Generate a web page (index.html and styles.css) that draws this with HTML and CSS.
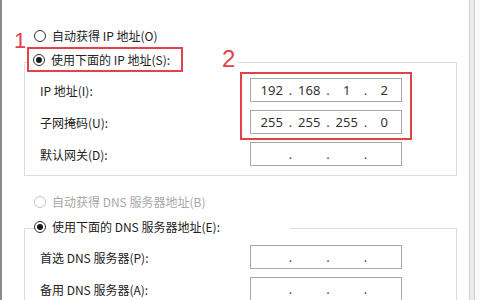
FILE: index.html
```html
<!DOCTYPE html>
<html lang="zh-CN">
<head>
<meta charset="utf-8">
<title>IP 设置</title>
<link rel="stylesheet" href="styles.css">
</head>
<body>
<div class="screen">
  <div class="edge-left"></div>
  <main class="panel">
    <div class="radio-row first">
      <span class="radio"></span><span class="rtext">自动获得 IP 地址(O)</span>
    </div>
    <div class="legend legend-ip">
      <div class="mark-box">
        <span class="radio on"></span><span class="rtext">使用下面的 IP 地址(S):</span>
      </div>
    </div>
    <section class="group group-ip">
      <div class="field-row">
        <span class="label">IP 地址(I):</span>
        <div class="ip"><span>192</span><i>.</i><span>168</span><i>.</i><span>1</span><i>.</i><span>2</span></div>
      </div>
      <div class="field-row">
        <span class="label">子网掩码(U):</span>
        <div class="ip"><span>255</span><i>.</i><span>255</span><i>.</i><span>255</span><i>.</i><span>0</span></div>
      </div>
      <div class="field-row">
        <span class="label">默认网关(D):</span>
        <div class="ip"><span></span><i>.</i><span></span><i>.</i><span></span><i>.</i><span></span></div>
      </div>
    </section>

    <div class="radio-row disabled">
      <span class="radio"></span><span class="rtext">自动获得 DNS 服务器地址(B)</span>
    </div>
    <div class="legend legend-dns">
      <span class="radio on"></span><span class="rtext">使用下面的 DNS 服务器地址(E):</span>
    </div>
    <section class="group group-dns">
      <div class="field-row">
        <span class="label">首选 DNS 服务器(P):</span>
        <div class="ip"><span></span><i>.</i><span></span><i>.</i><span></span><i>.</i><span></span></div>
      </div>
      <div class="field-row">
        <span class="label">备用 DNS 服务器(A):</span>
        <div class="ip"><span></span><i>.</i><span></span><i>.</i><span></span><i>.</i><span></span></div>
      </div>
    </section>

    <span class="anno anno-1">1</span>
    <span class="anno anno-2">2</span>
    <div class="anno-box"></div>
  </main>
  <div class="scroll-strip"></div>
  <div class="edge-right"></div>
</div>
</body>
</html>
```

FILE: styles.css
```css
html, body {
  margin: 0;
  padding: 0;
  background: #ffffff;
}

body {
  width: 480px;
  height: 300px;
  overflow: hidden;
  font-family: "Noto Sans CJK SC", "Noto Sans", sans-serif;
  font-size: 12px;
  color: #222222;
}

.screen {
  display: flex;
  width: 480px;
  height: 300px;
}

.edge-left {
  width: 2px;
  flex: none;
  background: #8c8c8c;
}

.panel {
  position: relative;
  width: 467px;
  flex: none;
  padding-top: 26px;
  box-sizing: border-box;
}

.scroll-strip {
  width: 6px;
  flex: none;
  box-sizing: border-box;
  background: #ebebeb;
  border-left: 1px solid #d2d2d2;
  border-right: 1px solid #cdcdcd;
}

.edge-right {
  flex: 1;
  background: #fafafa;
}

/* radio rows */
.radio-row,
.legend-dns,
.mark-box {
  display: flex;
  align-items: center;
  gap: 6px;
  height: 20px;
  line-height: 20px;
  white-space: nowrap;
}

.radio-row {
  margin-left: 32px;
}

.radio {
  width: 12px;
  height: 12px;
  flex: none;
  box-sizing: border-box;
  border: 1px solid #333333;
  border-radius: 50%;
  background: #ffffff;
  display: flex;
  align-items: center;
  justify-content: center;
}

.radio.on::after {
  content: "";
  width: 6px;
  height: 6px;
  border-radius: 50%;
  background: #1a1a1a;
}

.disabled {
  margin-top: 16px;
  color: #a8a8a8;
}

.disabled .radio {
  border-color: #c6c6c6;
}

/* legends that sit on the group border */
.legend {
  position: relative;
  background: #ffffff;
}

.legend-ip {
  margin-top: 1px;
  margin-left: 25px;
  width: 211px;
  margin-bottom: -10px;
}

.mark-box {
  width: 156px;
  height: 25px;
  box-sizing: border-box;
  border: 2px solid #e2434a;
  padding-left: 4px;
  background: #ffffff;
}

.legend-dns {
  margin-top: 5px;
  margin-left: 32px;
  width: 256px;
  margin-bottom: -9px;
}

/* group boxes */
.group {
  margin-left: 22px;
  width: 433px;
  box-sizing: border-box;
  border: 1px solid #dcdcdc;
  padding: 15px 0 9px 15px;
  display: grid;
  row-gap: 8px;
}

.group-dns {
  padding-top: 16px;
}

.field-row {
  display: grid;
  grid-template-columns: 210px 152px;
  align-items: center;
  height: 24px;
}

.label {
  white-space: nowrap;
}

.ip {
  height: 24px;
  box-sizing: border-box;
  border: 1px solid #a8a8a8;
  padding-left: 4px;
  display: grid;
  grid-template-columns: 1fr 4px 1fr 4px 1fr 4px 1fr;
  align-items: center;
  font-family: "Noto Sans", "Noto Sans CJK SC", sans-serif;
  font-size: 13px;
  line-height: 20px;
  color: #333333;
}

.ip span {
  text-align: center;
}

.ip i {
  font-style: normal;
  text-align: center;
  color: #444444;
}

/* annotations */
.anno {
  position: absolute;
  font-family: "Liberation Sans", sans-serif;
  color: #e2434a;
}

.anno-1 {
  left: 12px;
  top: 30px;
  font-size: 22px;
  line-height: 22px;
}

.anno-2 {
  left: 220px;
  top: 47px;
  font-size: 24px;
  line-height: 24px;
}

.anno-box {
  position: absolute;
  left: 238px;
  top: 72px;
  width: 172px;
  height: 68px;
  box-sizing: border-box;
  border: 2px solid #e2434a;
}
```
